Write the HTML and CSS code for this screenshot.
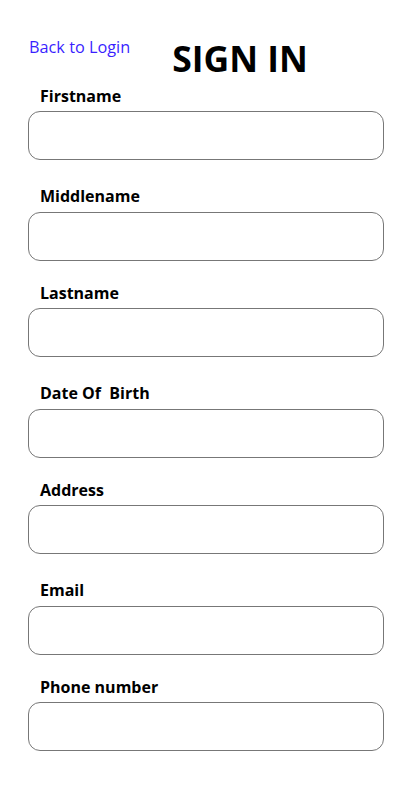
FILE: index.html
```html
<!DOCTYPE html>
<html lang="en">
<head>
<meta charset="utf-8">
<title>Sign In</title>
<link rel="stylesheet" href="styles.css">
</head>
<body>
<div class="page">
  <header class="top">
    <a class="back" href="#">Back to Login</a>
    <h1 class="title">SIGN IN</h1>
  </header>
  <form class="form">
    <div class="field odd">
      <label class="label">Firstname</label>
      <input class="input" type="text">
    </div>
    <div class="field even">
      <label class="label">Middlename</label>
      <input class="input" type="text">
    </div>
    <div class="field odd">
      <label class="label">Lastname</label>
      <input class="input" type="text">
    </div>
    <div class="field even">
      <label class="label">Date Of&nbsp; Birth</label>
      <input class="input" type="text">
    </div>
    <div class="field odd">
      <label class="label">Address</label>
      <input class="input" type="text">
    </div>
    <div class="field even">
      <label class="label">Email</label>
      <input class="input" type="text">
    </div>
    <div class="field odd">
      <label class="label">Phone number</label>
      <input class="input" type="text">
    </div>
  </form>
</div>
</body>
</html>
```

FILE: styles.css
```css
* { box-sizing: border-box; }
html, body {
  margin: 0;
  padding: 0;
  background: #fff;
}
body {
  font-family: "Open Sans", "Noto Sans", sans-serif;
  color: #000;
}
.page {
  width: 356px;
  margin-left: 28px;
  padding-top: 36px;
}
.top {
  display: flex;
  align-items: flex-start;
  height: 50px;
}
.back {
  font-size: 16.3px;
  line-height: 22px;
  color: #3a1fff;
  text-decoration: none;
  margin-left: 1px;
}
.title {
  margin: 0 0 0 42px;
  font-size: 35.5px;
  line-height: 44px;
  font-weight: 700;
}
.form {
  display: flex;
  flex-direction: column;
}
.field {
  display: flex;
  flex-direction: column;
}
.label {
  display: block;
  padding-left: 12px;
  font-size: 16px;
  line-height: 20px;
  font-weight: 700;
}
.input {
  display: block;
  width: 356px;
  height: 49px;
  border: 1px solid #777;
  border-radius: 12px;
  background: #fff;
  font: inherit;
  padding: 0 12px;
}
.field.odd .input { margin-top: 5px; }
.field.even .input { margin-top: 6px; }
.field.odd { margin-bottom: 26px; }
.field.even { margin-bottom: 22px; }
```
